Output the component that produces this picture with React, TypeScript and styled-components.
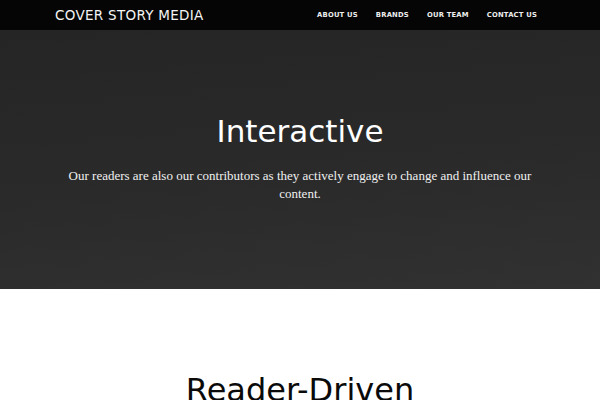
import React from "react";
import styled, { createGlobalStyle } from "styled-components";

const Global = createGlobalStyle`
  html, body { margin: 0; padding: 0; background: #ffffff; }
  body { font-family: "DejaVu Sans", "Open Sans", sans-serif; }
`;

const Page = styled.div`
  width: 600px;
  min-height: 400px;
  overflow: hidden;
`;

const NavBar = styled.header`
  height: 30px;
  background: #050505;
  display: flex;
  align-items: center;
  justify-content: space-between;
  padding: 0 63px 0 55px;
`;

const Logo = styled.div`
  color: #f4f4f4;
  font-family: "DejaVu Sans", sans-serif;
  font-size: 13.5px;
  letter-spacing: 0.3px;
  font-weight: 500;
`;

const Menu = styled.nav`
  display: flex;
  gap: 18px;
`;

const MenuItem = styled.a`
  color: #eeeeee;
  font-family: "DejaVu Sans", sans-serif;
  font-size: 6.8px;
  font-weight: bold;
  letter-spacing: 0.2px;
  text-decoration: none;
`;

const Hero = styled.section`
  height: 259px;
  background: linear-gradient(175deg, #252525 0%, #2a2a2a 55%, #313131 100%);
  display: flex;
  flex-direction: column;
  align-items: center;
  padding-top: 82px;
  box-sizing: border-box;
`;

const HeroTitle = styled.h1`
  margin: 0;
  color: #ffffff;
  font-family: "DejaVu Sans", sans-serif;
  font-weight: normal;
  font-size: 31px;
  line-height: 38px;
`;

const HeroText = styled.p`
  margin: 17px 0 0;
  width: 466px;
  text-align: center;
  color: #f0f0f0;
  font-family: "Liberation Serif", serif;
  font-size: 13px;
  line-height: 18px;
`;

const Section = styled.section`
  display: flex;
  justify-content: center;
  padding-top: 81px;
`;

const SectionTitle = styled.h2`
  margin: 0;
  color: #0a0a0a;
  font-family: "DejaVu Sans", sans-serif;
  font-weight: normal;
  font-size: 32px;
  line-height: 40px;
`;

export default function App() {
  return (
    <Page>
      <Global />
      <NavBar>
        <Logo>COVER STORY MEDIA</Logo>
        <Menu>
          <MenuItem href="#">ABOUT US</MenuItem>
          <MenuItem href="#">BRANDS</MenuItem>
          <MenuItem href="#">OUR TEAM</MenuItem>
          <MenuItem href="#">CONTACT US</MenuItem>
        </Menu>
      </NavBar>
      <Hero>
        <HeroTitle>Interactive</HeroTitle>
        <HeroText>
          Our readers are also our contributors as they actively engage to change and influence our content.
        </HeroText>
      </Hero>
      <Section>
        <SectionTitle>Reader-Driven</SectionTitle>
      </Section>
    </Page>
  );
}
